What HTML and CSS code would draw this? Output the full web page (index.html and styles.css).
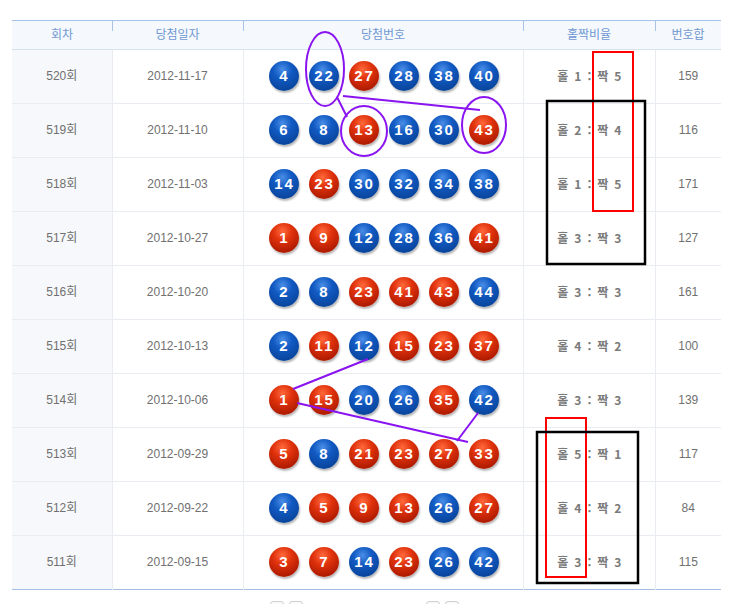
FILE: index.html
```html
<!DOCTYPE html>
<html lang="ko">
<head>
<meta charset="utf-8">
<title>당첨번호</title>
<link rel="stylesheet" href="styles.css">
</head>
<body>
<div class="page">
<table class="lotto">
  <colgroup>
    <col class="c1"><col class="c2"><col class="c3"><col class="c4"><col class="c5">
  </colgroup>
  <thead>
    <tr><th class="first">회차</th><th>당첨일자</th><th>당첨번호</th><th>홀짝비율</th><th>번호합</th></tr>
  </thead>
  <tbody>
    <tr><td class="round">520회</td><td>2012-11-17</td><td><div class="balls"><span class="ball b">4</span><span class="ball b">22</span><span class="ball r">27</span><span class="ball b">28</span><span class="ball b">38</span><span class="ball b">40</span></div></td><td class="ratio">홀 1 : 짝 5</td><td>159</td></tr>
    <tr><td class="round">519회</td><td>2012-11-10</td><td><div class="balls"><span class="ball b">6</span><span class="ball b">8</span><span class="ball r">13</span><span class="ball b">16</span><span class="ball b">30</span><span class="ball r">43</span></div></td><td class="ratio">홀 2 : 짝 4</td><td>116</td></tr>
    <tr><td class="round">518회</td><td>2012-11-03</td><td><div class="balls"><span class="ball b">14</span><span class="ball r">23</span><span class="ball b">30</span><span class="ball b">32</span><span class="ball b">34</span><span class="ball b">38</span></div></td><td class="ratio">홀 1 : 짝 5</td><td>171</td></tr>
    <tr><td class="round">517회</td><td>2012-10-27</td><td><div class="balls"><span class="ball r">1</span><span class="ball r">9</span><span class="ball b">12</span><span class="ball b">28</span><span class="ball b">36</span><span class="ball r">41</span></div></td><td class="ratio">홀 3 : 짝 3</td><td>127</td></tr>
    <tr><td class="round">516회</td><td>2012-10-20</td><td><div class="balls"><span class="ball b">2</span><span class="ball b">8</span><span class="ball r">23</span><span class="ball r">41</span><span class="ball r">43</span><span class="ball b">44</span></div></td><td class="ratio">홀 3 : 짝 3</td><td>161</td></tr>
    <tr><td class="round">515회</td><td>2012-10-13</td><td><div class="balls"><span class="ball b">2</span><span class="ball r">11</span><span class="ball b">12</span><span class="ball r">15</span><span class="ball r">23</span><span class="ball r">37</span></div></td><td class="ratio">홀 4 : 짝 2</td><td>100</td></tr>
    <tr><td class="round">514회</td><td>2012-10-06</td><td><div class="balls"><span class="ball r">1</span><span class="ball r">15</span><span class="ball b">20</span><span class="ball b">26</span><span class="ball r">35</span><span class="ball b">42</span></div></td><td class="ratio">홀 3 : 짝 3</td><td>139</td></tr>
    <tr><td class="round">513회</td><td>2012-09-29</td><td><div class="balls"><span class="ball r">5</span><span class="ball b">8</span><span class="ball r">21</span><span class="ball r">23</span><span class="ball r">27</span><span class="ball r">33</span></div></td><td class="ratio">홀 5 : 짝 1</td><td>117</td></tr>
    <tr><td class="round">512회</td><td>2012-09-22</td><td><div class="balls"><span class="ball b">4</span><span class="ball r">5</span><span class="ball r">9</span><span class="ball r">13</span><span class="ball b">26</span><span class="ball r">27</span></div></td><td class="ratio">홀 4 : 짝 2</td><td>84</td></tr>
    <tr><td class="round">511회</td><td>2012-09-15</td><td><div class="balls"><span class="ball r">3</span><span class="ball r">7</span><span class="ball b">14</span><span class="ball r">23</span><span class="ball b">26</span><span class="ball b">42</span></div></td><td class="ratio">홀 3 : 짝 3</td><td>115</td></tr>
  </tbody>
</table>
<div class="pager">
  <span class="pbtn"></span><span class="pbtn"></span>
  <span class="pspace"></span>
  <span class="pbtn"></span><span class="pbtn"></span>
</div>
</div>

<svg class="marks" width="734" height="604" viewBox="0 0 734 604" xmlns="http://www.w3.org/2000/svg">
  <g fill="none" stroke="#8a14f0" stroke-width="2">
    <ellipse cx="325" cy="69" rx="19" ry="37"/>
    <line x1="343" y1="96" x2="480" y2="110"/>
    <line x1="337" y1="97" x2="347" y2="117"/>
    <ellipse cx="364" cy="131" rx="23" ry="25"/>
    <ellipse cx="484" cy="125" rx="22" ry="28"/>
    <line x1="293" y1="389" x2="368" y2="359"/>
    <line x1="297" y1="403" x2="468" y2="442"/>
    <line x1="478" y1="413" x2="457" y2="441"/>
  </g>
  <g fill="none" stroke="#ff0000" stroke-width="2">
    <rect x="593" y="52" width="40" height="159"/>
    <rect x="546" y="418" width="40" height="159"/>
  </g>
  <g fill="none" stroke="#000" stroke-width="2.5">
    <rect x="547" y="101" width="98" height="163"/>
    <rect x="537" y="432" width="101" height="151"/>
  </g>
</svg>
</body>
</html>
```
FILE: styles.css
```css
html, body {
  margin: 0;
  padding: 0;
  background: #fff;
}
body {
  position: relative;
  width: 734px;
  height: 604px;
  overflow: hidden;
  font-family: "Liberation Sans", "Noto Sans CJK KR", sans-serif;
  font-size: 12px;
  color: #707070;
}
.page {
  padding: 20px 0 0 12px;
}
.lotto {
  border-collapse: collapse;
  table-layout: fixed;
  width: 709px;
  border-top: 1px solid #a6c2e8;
  border-bottom: 1px solid #a6c0e2;
}
.c1 { width: 100px; }
.c2 { width: 131px; }
.c3 { width: 280px; }
.c4 { width: 132px; }
.c5 { width: 66px; }

.lotto th {
  height: 26px;
  padding: 0 0 2px;
  font-weight: normal;
  color: #6f98d2;
  font-size: 12px;
  line-height: 14px;
  font-family: "Noto Sans CJK KR", sans-serif;
  border-bottom: 1px solid #d6e2ec;
  background: linear-gradient(#a9c4e8, #a9c4e8) no-repeat left top / 1px 10px, #f5f8fd;
}
.lotto th.first {
  background: #f5f8fd;
}
.lotto td {
  height: 51px;
  padding: 0 0 2px;
  line-height: 14px;
  text-align: center;
  border-bottom: 1px solid #e9edf1;
  border-left: 1px solid #e9edf1;
}
.lotto tbody tr:last-child td {
  border-bottom: none;
}
.lotto td.round {
  border-left: none;
  background: #f6f8fb;
}
.balls {
  display: flex;
  justify-content: center;
  gap: 10px;
  padding-left: 1px;
  margin-top: 1px;
}
.ball {
  width: 30px;
  height: 30px;
  border-radius: 50%;
  display: flex;
  align-items: center;
  justify-content: center;
  color: #fff;
  font-family: "Liberation Sans", sans-serif;
  font-weight: bold;
  font-size: 15px;
  letter-spacing: 2px;
  padding-left: 2px;
  box-sizing: border-box;
  box-shadow: 1px 2px 2px rgba(0, 0, 0, 0.28);
}
.ball.b {
  background: radial-gradient(circle at 45% 28%, #4a8ee6 0%, #1159c2 35%, #0a469e 75%, #14509e 100%);
}
.ball.r {
  background: radial-gradient(circle at 45% 28%, #ff6a3c 0%, #e0320c 35%, #b01c02 75%, #b82a10 100%);
}
.lotto td.ratio {
  font-family: "Noto Sans CJK KR", sans-serif;
  font-weight: bold;
  font-size: 12px;
  letter-spacing: 1.3px;
  color: #7a7a7a;
  padding-left: 2px;
}
.pager {
  display: flex;
  gap: 5px;
  margin: 11px 0 0 258px;
}
.pbtn {
  width: 14px;
  height: 14px;
  border: 1px solid #cfcfcf;
  border-radius: 3px;
  box-sizing: border-box;
  background: #fafafa;
}
.pspace {
  width: 113px;
}
.marks {
  position: absolute;
  left: 0;
  top: 0;
  pointer-events: none;
}
```
